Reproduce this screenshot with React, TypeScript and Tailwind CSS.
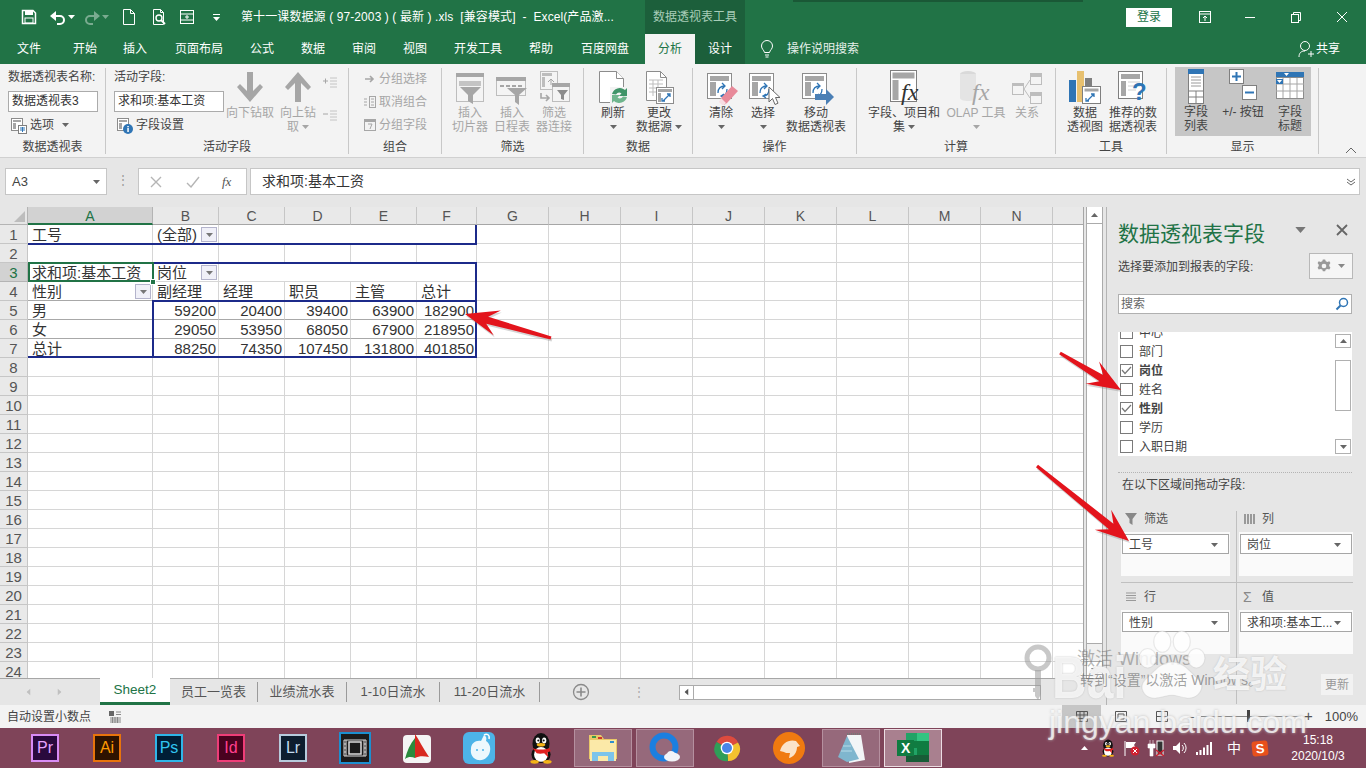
import type { ReactNode } from "react";

const DIM = "#a6a6a6";

function Caret({ className = "", color = "#666" }: { className?: string; color?: string }) {
  return (
    <svg width="7" height="4" viewBox="0 0 7 4" className={className}>
      <path d="M0 0h7L3.5 4z" fill={color} />
    </svg>
  );
}

// ---- ribbon icons ----
function PivotBase({ children, w = 36, h = 36 }: { children?: ReactNode; w?: number; h?: number }) {
  return (
    <svg width={w} height={h} viewBox="0 0 36 36">
      <rect x="4.5" y="4.5" width="24" height="25" fill="#fff" stroke="#8c8c8c" />
      <rect x="7" y="7" width="19" height="5" fill="#a6a6a6" />
      <rect x="7" y="13" width="6" height="14" fill="#a6a6a6" />
      <path d="M15 24c0-5 3-7 7-7m-3-3 3 3-3 3M24 20c0 4-2 7-6 7m3 2-3-2 3-2" fill="none" stroke="#2f75b5" strokeWidth="1.300" />
      {children}
    </svg>
  );
}

function SlicerIcon() {
  return (
    <svg width="34" height="36" viewBox="0 0 34 36">
      <rect x="3.500" y="4.500" width="27" height="28" fill="#f4f4f4" stroke="#bdbdbd" />
      <rect x="3" y="4" width="28" height="4" fill="#a6a6a6" />
      <rect x="6" y="12" width="22" height="5" fill="#c4c4c4" />
      <path d="M7 18h21l-8 8v9l-5-3v-6z" fill="#a6a6a6" />
    </svg>
  );
}

function TimelineIcon() {
  return (
    <svg width="34" height="36" viewBox="0 0 34 36">
      <rect x="1.500" y="8.500" width="29" height="18" fill="#f4f4f4" stroke="#bdbdbd" />
      <rect x="1" y="8" width="30" height="4" fill="#a6a6a6" />
      <path d="M5 17h4M11 17h4M17 17h4M23 17h4" stroke="#a6a6a6" strokeWidth="2" />
      <path d="M12 19h20l-8 7v10l-4-3v-7z" fill="#a6a6a6" />
    </svg>
  );
}

function FilterLinkIcon() {
  return (
    <svg width="34" height="36" viewBox="0 0 34 36">
      <rect x="3.500" y="2.500" width="17" height="18" fill="#f4f4f4" stroke="#bdbdbd" />
      <rect x="5" y="4" width="10" height="3" fill="#bdbdbd" />
      <rect x="5" y="8" width="3" height="10" fill="#bdbdbd" />
      <path d="M11 13l3-3 3 3M14 10v6" fill="none" stroke="#a6a6a6" />
      <rect x="15.500" y="14.500" width="17" height="18" fill="#f4f4f4" stroke="#bdbdbd" />
      <rect x="15" y="14" width="18" height="4" fill="#a6a6a6" />
      <path d="M20 21h11l-4 5v5l-3-1v-4z" fill="#8c8c8c" />
      <path d="M4 24v5h8m-3-3 3 3-3 3" fill="none" stroke="#a6a6a6" strokeWidth="1.600" />
    </svg>
  );
}

function RefreshIcon() {
  return (
    <svg width="34" height="36" viewBox="0 0 34 36">
      <path d="M3.500 2.500h17l7 7v24h-24z" fill="#fff" stroke="#8c8c8c" />
      <path d="M20.500 2.500v7h7" fill="#fff" stroke="#8c8c8c" />
      <rect x="14" y="18" width="20" height="18" fill="#f3f3f3" />
      <path d="M16 25a8 8 0 0 1 13-4l2-2v8h-8l2.500-2.500a4 4 0 0 0-5.500 1z" fill="#3f9468" />
      <path d="M31 28a8 8 0 0 1-13 4l-2 2v-8h8l-2.500 2.500a4 4 0 0 0 5.500-1z" fill="#6fb58d" />
    </svg>
  );
}

function ChangeSourceIcon() {
  return (
    <svg width="34" height="36" viewBox="0 0 34 36">
      <path d="M4.500 2.500h14l6 6v23h-20z" fill="#fff" stroke="#8c8c8c" />
      <path d="M18.500 2.500v6h6" fill="none" stroke="#8c8c8c" />
      <path d="M7 11h14M7 15h14M7 19h14M7 23h14M11 11v16M16 11v16" stroke="#bdbdbd" />
      <rect x="14.500" y="18.500" width="17" height="16" fill="#fff" stroke="#8c8c8c" />
      <rect x="16" y="20" width="14" height="3" fill="#a6a6a6" />
      <rect x="16" y="24" width="3" height="9" fill="#a6a6a6" />
      <path d="M21 32l7-7m-3 0h3v3M20 29v3h3" fill="none" stroke="#2f75b5" strokeWidth="1.300" />
    </svg>
  );
}

function ClearIcon() {
  return (
    <PivotBase>
      <path d="M18 29l11-12 6 5-11 12-3 2z" fill="#e88a9a" />
      <path d="M18 29l5 5-2 2h-2l-3-3z" fill="#f7dde2" />
    </PivotBase>
  );
}

function SelectIcon() {
  return (
    <PivotBase>
      <path d="M24 18v15l3.500-3.500 2.500 6 3-1.300-2.500-5.700H35z" fill="#fff" stroke="#666" />
    </PivotBase>
  );
}

function MoveIcon() {
  return (
    <PivotBase>
      <path d="M17 25h11v-5l8 8-8 8v-5H17z" fill="#4a7fb5" />
    </PivotBase>
  );
}

function FieldFxIcon() {
  return (
    <svg width="34" height="38" viewBox="0 0 34 38">
      <rect x="3.500" y="2.500" width="26" height="31" fill="#fff" stroke="#7f7f7f" />
      <rect x="5.500" y="4.500" width="22" height="6" fill="#a6a6a6" />
      <rect x="5.500" y="12" width="6" height="20" fill="#a6a6a6" />
      <text x="14" y="32" fontSize="24" fontStyle="italic" fontFamily="Liberation Serif" fill="#333">fx</text>
    </svg>
  );
}

function OlapIcon() {
  return (
    <svg width="40" height="38" viewBox="0 0 40 38">
      <ellipse cx="12" cy="6" rx="8" ry="3" fill="#d9d9d9" />
      <path d="M4 6v24c0 4 16 4 16 0V6z" fill="#e4e4e4" />
      <text x="16" y="32" fontSize="24" fontStyle="italic" fontFamily="Liberation Serif" fill="#a6a6a6">fx</text>
    </svg>
  );
}

function RelationIcon() {
  return (
    <svg width="34" height="36" viewBox="0 0 34 36">
      <g fill="#f4f4f4" stroke="#bdbdbd">
        <rect x="2.500" y="14.500" width="11" height="11" />
        <rect x="20.500" y="4.500" width="11" height="11" />
        <rect x="20.500" y="23.500" width="11" height="11" />
      </g>
      <path d="M21 5h10v3H21zM21 24h10v3H21zM3 15h10v2H3z" fill="#bdbdbd" />
      <path d="M14 20l6-9M14 20l6 9" stroke="#bdbdbd" />
    </svg>
  );
}

function PivotChartIcon() {
  return (
    <svg width="34" height="38" viewBox="0 0 34 38">
      <rect x="1" y="12" width="7" height="22" fill="#2f75b5" />
      <rect x="9" y="3" width="7" height="31" fill="#e7c06f" />
      <rect x="17" y="10" width="7" height="10" fill="#7f7f7f" />
      <rect x="14.500" y="18.500" width="18" height="17" fill="#fff" stroke="#7f7f7f" />
      <rect x="16.500" y="20.500" width="14" height="3" fill="#a6a6a6" />
      <path d="M19 33l7-7m-3 0h3v3M18 30v3h3" fill="none" stroke="#2f75b5" strokeWidth="1.300" />
    </svg>
  );
}

function RecommendIcon() {
  return (
    <svg width="34" height="38" viewBox="0 0 34 38">
      <rect x="2.500" y="3.500" width="24" height="27" fill="#fff" stroke="#7f7f7f" />
      <rect x="5" y="6" width="19" height="5" fill="#a6a6a6" />
      <rect x="5" y="13" width="5" height="15" fill="#a6a6a6" />
      <path d="M12 14h12M12 18h12M12 22h8" stroke="#d0d0d0" />
      <text x="16" y="32" fontSize="24" fontWeight="bold" fontFamily="Liberation Sans" fill="#2f75b5">?</text>
    </svg>
  );
}

function FieldListIcon() {
  return (
    <svg width="20" height="38" viewBox="0 0 20 38">
      <rect x="2.500" y="2.500" width="15" height="34" fill="#fff" stroke="#7f7f7f" />
      <rect x="2" y="2" width="16" height="5" fill="#2f75b5" />
      <path d="M5 10h10M5 13h10M5 16h10M5 19h10" stroke="#9a9a9a" />
      <path d="M3 24h14M3 30h14M10 24v12" stroke="#7f7f7f" />
    </svg>
  );
}

function PlusMinusIcon() {
  return (
    <svg width="30" height="36" viewBox="0 0 30 36">
      <rect x="1.500" y="1.500" width="14" height="14" fill="#fff" stroke="#7f7f7f" />
      <path d="M4 8.500h9M8.500 4v9" stroke="#2f75b5" strokeWidth="2" />
      <rect x="14.500" y="17.500" width="14" height="14" fill="#fff" stroke="#7f7f7f" />
      <path d="M17 24.500h9" stroke="#2f75b5" strokeWidth="2" />
    </svg>
  );
}

function HeaderIcon() {
  return (
    <svg width="30" height="36" viewBox="0 0 30 36">
      <rect x="1" y="4" width="28" height="6" fill="#2f75b5" />
      <rect x="1.500" y="9.500" width="27" height="21" fill="#fff" stroke="#8c8c8c" />
      <path d="M1 16h28M1 23h28M8 10v20M15 10v20M22 10v20" stroke="#a6a6a6" />
      <rect x="1" y="11" width="7" height="5" fill="#2f75b5" />
      <path d="M9 5h5l-2.500 3zM2 12h5l-2.500 3z" fill="#fff" />
    </svg>
  );
}

function Arrow({ up }: { up?: boolean }) {
  return (
    <svg width="28" height="32" viewBox="0 0 28 32" className={up ? "" : "rotate-180"}>
      <path d="M14 1L27 16l-3 3-7-7v19h-6V12l-7 7-3-3z" fill="#a6a6a6" />
    </svg>
  );
}

function SmallTable({ color = "#8c8c8c", info }: { color?: string; info?: boolean }) {
  return (
    <svg width="17" height="17" viewBox="0 0 17 17">
      <rect x="1.500" y="1.500" width="11" height="12" fill="#fff" stroke={color} />
      <rect x="3" y="3" width="8" height="2" fill="#a6a6a6" />
      <rect x="3" y="6" width="3" height="6" fill="#a6a6a6" />
      {info ? (
        <>
          <circle cx="12" cy="12" r="5" fill="#2f75b5" />
          <rect x="11.300" y="11" width="1.500" height="4" fill="#fff" />
          <rect x="11.300" y="9" width="1.500" height="1.300" fill="#fff" />
        </>
      ) : (
        <>
          <rect x="8.500" y="8.500" width="8" height="8" fill="#fff" stroke="#7f7f7f" />
          <path d="M10 11h5M10 13h5M12.500 10v5" stroke="#2f75b5" />
        </>
      )}
    </svg>
  );
}

function Big({ w, icon, lines, dim, caret }: { w: string; icon: ReactNode; lines: string[]; dim?: boolean; caret?: "inline" | "below" }) {
  return (
    <div className={`${w} shrink-0 flex flex-col items-center ${dim ? "text-[#a6a6a6]" : "text-[#444]"}`}>
      <div className="h-[38px] flex items-center justify-center">{icon}</div>
      {lines.map((l, i) => (
        <div key={i} className="h-[14px] leading-[14px] whitespace-nowrap flex items-center gap-[3px]">
          {l}
          {caret === "inline" && i === lines.length - 1 && <Caret color={dim ? DIM : "#666"} />}
        </div>
      ))}
      {caret === "below" && (
        <div className="h-[14px] flex items-center">
          <Caret color={dim ? DIM : "#666"} />
        </div>
      )}
    </div>
  );
}

function Group({ w, label, children }: { w: string; label: string; children: ReactNode }) {
  return (
    <div className={`${w} shrink-0 h-[86px] border-r border-[#c8c8c8] flex flex-col`}>
      <div className="h-[72px] flex">{children}</div>
      <div className="h-[14px] leading-[14px] text-center text-[#444]">{label}</div>
    </div>
  );
}

function Ribbon() {
  return (
    <div className="h-[94px] pt-[4px] bg-[#f3f3f3] border-b border-[#d0d0d0] flex text-[12px]">
      <Group w="w-[106px]" label="数据透视表">
        <div className="pl-2 pt-[2px] text-[#444]">
          <div className="leading-[14px]">数据透视表名称:</div>
          <div className="mt-[7px] w-[90px] h-[21px] border border-[#ababab] bg-white px-[3px] leading-[19px] text-[#333]">数据透视表3</div>
          <div className="mt-[5px] h-[16px] flex items-center">
            <span className="ml-[2px] mr-[3px]"><SmallTable /></span>选项<Caret className="ml-[8px]" />
          </div>
        </div>
      </Group>
      <Group w="w-[243px]" label="活动字段">
        <div className="pl-2 pt-[2px] w-[119px] shrink-0 text-[#444]">
          <div className="leading-[14px]">活动字段:</div>
          <div className="mt-[7px] w-[110px] h-[21px] border border-[#ababab] bg-white px-[3px] leading-[19px] text-[#333]">求和项:基本工资</div>
          <div className="mt-[5px] h-[16px] flex items-center">
            <span className="ml-[2px] mr-[3px]"><SmallTable info /></span>字段设置
          </div>
        </div>
        <Big w="w-[50px]" dim icon={<Arrow />} lines={["向下钻取"]} />
        <Big w="w-[46px]" dim icon={<Arrow up />} lines={["向上钻", "取"]} caret="inline" />
        <div className="flex flex-col items-center w-[18px] pt-[7px] text-[#a6a6a6]">
          <svg width="16" height="16" viewBox="0 0 16 16"><path d="M1 6h5M3.500 3.500v5" stroke="#a6a6a6" /><path d="M8 3h7M8 6h7M8 9h7M8 12h7" stroke="#c4c4c4" /></svg>
          <svg width="16" height="16" viewBox="0 0 16 16" className="mt-[17px]"><path d="M1 6h5" stroke="#a6a6a6" /><path d="M8 3h7M8 6h7M8 9h7M8 12h7" stroke="#c4c4c4" /></svg>
        </div>
      </Group>
      <Group w="w-[93px]" label="组合">
        <div className="pl-[14px] -mt-px text-[#a6a6a6]">
          <div className="h-[23px] flex items-center gap-[2px]">
            <svg width="14" height="14" viewBox="0 0 14 14"><path d="M2 7h8m-3-3 3 3-3 3" fill="none" stroke="#a6a6a6" strokeWidth="1.600" /></svg>分组选择
          </div>
          <div className="h-[23px] flex items-center gap-[2px]">
            <svg width="14" height="14" viewBox="0 0 14 14"><g fill="none" stroke="#a6a6a6"><rect x="6.500" y="1.500" width="6" height="11" /><path d="M1 4h3M1 7h3M1 10h3M8 4h3M8 7h3M8 10h3" /></g></svg>取消组合
          </div>
          <div className="h-[23px] flex items-center gap-[2px]">
            <svg width="14" height="14" viewBox="0 0 14 14"><rect x="1.500" y="1.500" width="11" height="11" fill="none" stroke="#a6a6a6" /><path d="M1 2h12v2H1z" fill="#a6a6a6" /><path d="M5 6h4l-2 5" fill="none" stroke="#a6a6a6" /></svg>分组字段
          </div>
        </div>
      </Group>
      <Group w="w-[142px]" label="筛选">
        <div className="pl-[7px] flex">
          <Big w="w-[42px]" dim icon={<SlicerIcon />} lines={["插入", "切片器"]} />
          <Big w="w-[42px]" dim icon={<TimelineIcon />} lines={["插入", "日程表"]} />
          <Big w="w-[42px]" dim icon={<FilterLinkIcon />} lines={["筛选", "器连接"]} />
        </div>
      </Group>
      <Group w="w-[109px]" label="数据">
        <div className="pl-[6px] flex">
          <Big w="w-[46px]" icon={<RefreshIcon />} lines={["刷新"]} caret="below" />
          <Big w="w-[46px]" icon={<ChangeSourceIcon />} lines={["更改", "数据源"]} caret="inline" />
        </div>
      </Group>
      <Group w="w-[164px]" label="操作">
        <div className="pl-[7px] flex">
          <Big w="w-[42px]" icon={<ClearIcon />} lines={["清除"]} caret="below" />
          <Big w="w-[42px]" icon={<SelectIcon />} lines={["选择"]} caret="below" />
          <Big w="w-[64px]" icon={<MoveIcon />} lines={["移动", "数据透视表"]} />
        </div>
      </Group>
      <Group w="w-[199px]" label="计算">
        <div className="pl-[4px] flex">
          <Big w="w-[86px]" icon={<FieldFxIcon />} lines={["字段、项目和", "集"]} caret="inline" />
          <Big w="w-[58px]" dim icon={<OlapIcon />} lines={["OLAP 工具"]} caret="below" />
          <Big w="w-[44px]" dim icon={<RelationIcon />} lines={["关系"]} />
        </div>
      </Group>
      <Group w="w-[111px]" label="工具">
        <div className="pl-[5px] flex">
          <Big w="w-[48px]" icon={<PivotChartIcon />} lines={["数据", "透视图"]} />
          <Big w="w-[48px]" icon={<RecommendIcon />} lines={["推荐的数", "据透视表"]} />
        </div>
      </Group>
      <Group w="w-[152px]" label="显示">
        <div className="ml-[8px] -mt-px w-[136px] h-[69px] bg-[#c6c6c6] flex">
          <Big w="w-[42px]" icon={<FieldListIcon />} lines={["字段", "列表"]} />
          <Big w="w-[52px]" icon={<PlusMinusIcon />} lines={["+/- 按钮"]} />
          <Big w="w-[42px]" icon={<HeaderIcon />} lines={["字段", "标题"]} />
        </div>
      </Group>
      <div className="flex-1 flex justify-end items-end pb-[3px] pr-[9px]">
        <svg width="12" height="7" viewBox="0 0 12 7"><path d="M1 6l5-5 5 5" fill="none" stroke="#666" /></svg>
      </div>
    </div>
  );
}

// ---- title / tabs ----
function TitleBar() {
  return (
    <div className="relative h-[34px] bg-[#217346] flex items-center text-white text-[12px]">
      <svg width="18" height="18" viewBox="0 0 18 18" className="ml-[20px]">
        <path d="M2.500 2.500h10.500l2.500 2.500v10.500h-13z" fill="none" stroke="#fff" strokeWidth="1.500" />
        <rect x="5" y="3" width="8" height="4" fill="#fff" />
        <rect x="5" y="10" width="8" height="5" fill="none" stroke="#fff" />
      </svg>
      <svg width="18" height="18" viewBox="0 0 18 18" className="ml-[11px]">
        <path d="M4 8h7a4 4 0 0 1 0 8H8" fill="none" stroke="#fff" strokeWidth="2" />
        <path d="M7 3v10L1 8z" fill="#fff" />
      </svg>
      <Caret color="#fff" className="ml-[1px]" />
      <svg width="18" height="18" viewBox="0 0 18 18" className="ml-[8px] -scale-x-100 opacity-40">
        <path d="M4 8h7a4 4 0 0 1 0 8H8" fill="none" stroke="#fff" strokeWidth="2" />
        <path d="M7 3v10L1 8z" fill="#fff" />
      </svg>
      <Caret color="#fff" className="ml-[1px] opacity-40" />
      <svg width="16" height="18" viewBox="0 0 16 18" className="ml-[12px]">
        <path d="M2.500 1.500h7l4 4v11h-11zM9.500 1.500v4h4" fill="none" stroke="#fff" />
      </svg>
      <svg width="18" height="18" viewBox="0 0 18 18" className="ml-[13px]">
        <path d="M3.500 1.500h7l3 3v12h-10zM10.500 1.500v3h3" fill="none" stroke="#fff" />
        <circle cx="9" cy="10" r="3" fill="none" stroke="#fff" strokeWidth="1.400" />
        <path d="M11 12l4 4" stroke="#fff" strokeWidth="1.800" />
      </svg>
      <svg width="18" height="18" viewBox="0 0 18 18" className="ml-[10px]">
        <rect x="2.500" y="2.500" width="13" height="13" fill="none" stroke="#fff" />
        <path d="M3 6h12M3 12h12M9 7v4M7 9h4" stroke="#fff" />
      </svg>
      <span className="ml-[17px] text-[11px] leading-none">
        <span className="block w-[7px] border-t border-white mb-[2px]"></span>
        <Caret color="#fff" />
      </span>
      <div className="ml-[21px] whitespace-pre w-[385px] tracking-[0.1px]">第十一课数据源 ( 97-2003 ) ( 最新 ) .xls  [兼容模式]  -  Excel(产品激...</div>
      <div className="ml-[19px] w-[100px] h-[34px] bg-[#1c5f3b] text-[#a8cdb8] flex items-center justify-center">数据透视表工具</div>
      <div className="ml-[381px] w-[46px] h-[19px] bg-white text-[#217346] flex items-center justify-center">登录</div>
      <svg width="14" height="14" viewBox="0 0 14 14" className="ml-[26px]">
        <rect x="1.500" y="1.500" width="11" height="11" fill="none" stroke="#fff" />
        <path d="M1 4h12M7 11V6M5 8l2-2 2 2" fill="none" stroke="#fff" />
      </svg>
      <div className="ml-[33px] w-[10px] border-t border-white"></div>
      <svg width="12" height="12" viewBox="0 0 12 12" className="ml-[35px]">
        <rect x="1.500" y="3.500" width="7" height="8" fill="none" stroke="#fff" />
        <path d="M3.500 3V1.500h7v8H9" fill="none" stroke="#fff" />
      </svg>
      <svg width="12" height="12" viewBox="0 0 12 12" className="ml-[34px]">
        <path d="M1 1l10 10M11 1L1 11" stroke="#fff" />
      </svg>
      <div className="absolute left-[793px] top-0 w-[290px] h-[2px] bg-[#15462b] opacity-60"></div>
    </div>
  );
}

function TabBar() {
  const tabs: [string, string][] = [
    ["文件", "w-[58px]"],
    ["开始", "w-[54px]"],
    ["插入", "w-[46px]"],
    ["页面布局", "w-[82px]"],
    ["公式", "w-[44px]"],
    ["数据", "w-[58px]"],
    ["审阅", "w-[44px]"],
    ["视图", "w-[58px]"],
    ["开发工具", "w-[68px]"],
    ["帮助", "w-[58px]"],
    ["百度网盘", "w-[70px]"],
  ];
  return (
    <div className="h-[30px] bg-[#217346] flex items-center text-white text-[12px]">
      {tabs.map(([t, w]) => (
        <div key={t} className={`${w} shrink-0 text-center`}>{t}</div>
      ))}
      <div className="ml-[5px] w-[50px] h-[30px] bg-[#f3f3f3] text-[#217346] flex items-center justify-center">分析</div>
      <div className="w-[50px] h-[30px] bg-[#1c5f3b] flex items-center justify-center">设计</div>
      <svg width="14" height="18" viewBox="0 0 14 18" className="ml-[15px]">
        <path d="M4.500 12.500C4 10 1.500 9 1.500 6a5.500 5.500 0 0 1 11 0c0 3-2.500 4-3 6.500zM5 15h4M5.500 17h3" fill="none" stroke="#fff" />
      </svg>
      <div className="ml-[13px] w-[72px] text-[#e6f0ea]">操作说明搜索</div>
      <svg width="16" height="18" viewBox="0 0 16 18" className="ml-[439px]">
        <circle cx="7" cy="6" r="4.500" fill="none" stroke="#fff" />
        <path d="M1 17c0-4 2-6 6-6M10 14h6M13 11v6" fill="none" stroke="#fff" />
      </svg>
      <div className="ml-[2px]">共享</div>
    </div>
  );
}

function FormulaBar() {
  return (
    <div className="h-[49px] bg-[#e6e6e6] pt-[10px] pl-[5px] flex text-[#444]">
      <div className="w-[102px] h-[27px] bg-white border border-[#c6c6c6] flex items-center pl-[6px] text-[13px]">
        A3<Caret className="ml-auto mr-[6px]" />
      </div>
      <div className="w-[31px] text-center leading-[25px] text-[#999] text-[12px]">⋮</div>
      <div className="w-[109px] h-[27px] bg-white border border-[#c6c6c6] flex items-center text-[#b0b0b0]">
        <svg width="12" height="12" viewBox="0 0 12 12" className="ml-[11px]"><path d="M1 1l10 10M11 1L1 11" stroke="#b5b5b5" strokeWidth="1.400" /></svg>
        <svg width="14" height="12" viewBox="0 0 14 12" className="ml-[24px]"><path d="M1 7l4 4 8-10" fill="none" stroke="#b5b5b5" strokeWidth="1.400" /></svg>
        <span className="ml-[22px] text-[13px] italic text-[#555] font-['Liberation_Serif',serif]">fx</span>
      </div>
      <div className="ml-[3px] w-[1110px] h-[27px] bg-white border border-[#c6c6c6] flex items-center pl-[11px] text-[14px] text-[#333]">
        求和项:基本工资
        <svg width="10" height="8" viewBox="0 0 10 8" className="ml-auto mr-[3px]"><path d="M1 1l4 3 4-3M1 4l4 3 4-3" fill="none" stroke="#666" /></svg>
      </div>
    </div>
  );
}

// ---- sheet ----
const LETTERS = ["A", "B", "C", "D", "E", "F", "G", "H", "I", "J", "K", "L", "M", "N", ""];
const CELLS: Record<number, (string | number)[]> = {
  1: ["工号", "(全部)"],
  3: ["求和项:基本工资", "岗位"],
  4: ["性别", "副经理", "经理", "职员", "主管", "总计"],
  5: ["男", 59200, 20400, 39400, 63900, 182900],
  6: ["女", 29050, 53950, 68050, 67900, 218950],
  7: ["总计", 88250, 74350, 107450, 131800, 401850],
};

function FilterBtn() {
  return (
    <div className="absolute right-[1px] top-[2px] w-[16px] h-[15px] bg-[#f0f0f8] border border-[#b4b4cc] flex items-center justify-center">
      <Caret color="#777" />
    </div>
  );
}

function Sheet() {
  const rows = Array.from({ length: 24 }, (_, i) => i + 1);
  return (
    <div className="relative w-[1084px] h-[471px] overflow-hidden bg-white border-r border-[#a6a6a6] font-['Liberation_Sans','Noto_Sans_CJK_SC',sans-serif]">
      <div className="grid grid-cols-[28px_125px_66px_66px_66px_66px_60px_72px_72px_72px_72px_72px_72px_72px_72px_31px] grid-rows-[18px] auto-rows-[19px]">
        <div className="bg-[#e6e6e6] border-r border-b border-[#b4b4b4] flex items-end justify-end p-[2px]">
          <svg width="11" height="11" viewBox="0 0 11 11"><path d="M11 0v11H0z" fill="#bdbdbd" /></svg>
        </div>
        {LETTERS.map((l, i) => (
          <div
            key={i}
            className={`border-r text-[14px] leading-[19px] text-center ${i === 0 ? "bg-[#d2d2d2] border-[#b4b4b4] border-b-2 border-b-[#217346] text-[#217346]" : "bg-[#e9e9e9] border-[#c6c6c6] border-b border-b-[#a6a6a6] text-[#555]"}`}
          >
            {l}
          </div>
        ))}
        {rows.map((r) => (
          <Row key={r} r={r} />
        ))}
      </div>

      {/* pivot table outlines */}
      <div className="absolute left-[28px] top-[36px] w-[449px] h-[2px] bg-[#1c2a8a]"></div>
      <div className="absolute left-[475px] top-[18px] w-[2px] h-[19px] bg-[#1c2a8a]"></div>
      <div className="absolute left-[152px] top-[55px] w-[325px] h-[2px] bg-[#1c2a8a]"></div>
      <div className="absolute left-[475px] top-[55px] w-[2px] h-[96px] bg-[#1c2a8a]"></div>
      <div className="absolute left-[152px] top-[93px] w-[325px] h-[2px] bg-[#1c2a8a]"></div>
      <div className="absolute left-[152px] top-[94px] w-[2px] h-[57px] bg-[#1c2a8a]"></div>
      <div className="absolute left-[28px] top-[149px] w-[449px] h-[2px] bg-[#1c2a8a]"></div>
      {/* selected cell */}
      <div className="absolute left-[28px] top-[55px] w-[126px] h-[20px] border-2 border-[#217346]"></div>
      <div className="absolute left-[150px] top-[72px] w-[6px] h-[6px] bg-[#217346] border border-white"></div>
    </div>
  );
}

function Row({ r }: { r: number }) {
  const data = CELLS[r] ?? [];
  const rowHeadSel = r === 3;
  return (
    <>
      <div className={`border-r border-b text-[15px] leading-[20px] text-center ${rowHeadSel ? "bg-[#d2d2d2] border-[#b4b4b4] text-[#217346]" : "bg-[#e9e9e9] border-[#c6c6c6] text-[#555]"}`}>
        {r}
      </div>
      {LETTERS.map((_, c) => {
        const v = data[c];
        const merged = (r === 1 || r === 3) && c >= 2 && c <= 4;
        const dark = r >= 4 && r <= 6 && c <= 5;
        return (
          <div
            key={c}
            className={`relative border-b text-[15px] leading-[20px] pl-[4px] pr-[2px] whitespace-nowrap overflow-hidden text-[#333] ${merged ? "" : "border-r border-r-[#d6d6d6]"} ${dark ? "border-b-[#a8a8a8]" : "border-b-[#d6d6d6]"} ${typeof v === "number" ? "text-right" : "text-left"}`}
          >
            {v}
            {((r === 1 && c === 1) || (r === 3 && c === 1) || (r === 4 && c === 0)) && <FilterBtn />}
          </div>
        );
      })}
    </>
  );
}

function VScroll() {
  return (
    <div className="w-[22px] h-[471px] bg-[#e6e6e6] pl-[2px] flex flex-col">
      <div className="w-[17px] h-[471px] border-x border-[#ababab] bg-[#f0f0f0] flex flex-col">
        <div className="h-[17px] bg-white border-b border-[#ababab] flex items-center justify-center"><Caret className="rotate-180" /></div>
        <div className="h-[420px] bg-white border-b border-[#ababab]"></div>
        <div className="flex-1"></div>
        <div className="h-[17px] bg-white border-t border-[#ababab] flex items-center justify-center"><Caret /></div>
      </div>
    </div>
  );
}

function SheetTabs() {
  return (
    <div className="h-[27px] bg-[#e6e6e6] border-t border-[#a6a6a6] flex items-center text-[13px] text-[#555]">
      <div className="w-[100px] flex pl-[25px] gap-[24px]">
        <Caret className="rotate-90" color="#c0c0c0" />
        <Caret className="-rotate-90" color="#c0c0c0" />
      </div>
      <div className="w-[70px] h-[27px] -mt-px bg-white border-b-[3px] border-[#217346] text-[#217346] text-[13.500px] flex items-center justify-center">Sheet2</div>
      <div className="w-[88px] h-[20px] border-r border-[#9a9a9a] text-center leading-[20px]">员工一览表</div>
      <div className="w-[89px] h-[20px] border-r border-[#9a9a9a] text-center leading-[20px]">业绩流水表</div>
      <div className="w-[93px] h-[20px] border-r border-[#9a9a9a] text-center leading-[20px]">1-10日流水</div>
      <div className="w-[100px] h-[20px] border-r border-[#9a9a9a] text-center leading-[20px]">11-20日流水</div>
      <svg width="18" height="18" viewBox="0 0 18 18" className="ml-[32px]">
        <circle cx="9" cy="9" r="7.500" fill="none" stroke="#8a8a8a" strokeWidth="1.300" />
        <path d="M4.500 9h9M9 4.500v9" stroke="#8a8a8a" strokeWidth="1.600" />
      </svg>
      <div className="w-[84px] text-center text-[#aaa] text-[12px] pl-[14px]">⋮</div>
      <div className="ml-[5px] w-[362px] h-[15px] bg-[#f4f4f4] border border-[#ababab] flex items-center">
        <div className="w-[14px] h-[13px] bg-white border-r border-[#ababab] flex items-center justify-center"><Caret className="rotate-90" color="#555" /></div>
        <div className="flex-1 h-[13px] bg-white"></div>
      </div>
    </div>
  );
}

// ---- field panel ----
function FieldRow({ label, checked }: { label: string; checked?: boolean }) {
  return (
    <div className="h-[19px] flex items-center pl-[2px] text-[12px] text-[#444]">
      <div className="w-[13px] h-[13px] border border-[#7a7a7a] bg-white flex items-center justify-center mr-[6px]">
        {checked && <svg width="11" height="9" viewBox="0 0 11 9"><path d="M1 4l3 3.500L10 1" fill="none" stroke="#777" strokeWidth="1.200" /></svg>}
      </div>
      <span className={checked ? "font-bold" : ""}>{label}</span>
    </div>
  );
}

function Chip({ label }: { label: string }) {
  return (
    <div className="mx-[1px] mt-[2px] h-[20px] pt-[1px] bg-white border border-[#a6a6a6] flex items-center pl-[6px] pr-[10px] text-[12px] text-[#444] whitespace-nowrap">
      {label}
      <Caret className="ml-auto" />
    </div>
  );
}

function Area({ icon, title, chip, w }: { icon: ReactNode; title: string; chip: string; w: string }) {
  return (
    <div className={w}>
      <div className="h-[16px] flex items-center text-[12px] text-[#555]">
        <span className="w-[23px] pl-[4px] flex">{icon}</span>
        {title}
      </div>
      <div className="mt-[5px] h-[44px] bg-[#fafafa] overflow-hidden">
        <Chip label={chip} />
      </div>
    </div>
  );
}

function FieldPanel() {
  return (
    <div className="w-[260px] h-[498px] bg-[#e6e6e6] border-l border-[#b4b4b4] pl-[11px] pt-[9px] text-[12px] text-[#444]">
      <div className="h-[37px] flex items-center pr-[18px]">
        <span className="text-[21px] text-[#217346] leading-none -mt-[2px]">数据透视表字段</span>
        <Caret className="ml-auto mr-[32px] scale-150 -mt-[10px]" color="#777" />
        <svg width="12" height="12" viewBox="0 0 12 12" className="-mt-[10px]"><path d="M1 1l10 10M11 1L1 11" stroke="#666" strokeWidth="1.800" /></svg>
      </div>
      <div className="h-[26px] flex items-center pr-[13px]">
        <span className="mt-[2px]">选择要添加到报表的字段:</span>
        <div className="ml-auto w-[44px] h-[26px] bg-[#f6f6f6] border border-[#b8b8b8] flex items-center justify-center gap-[7px]">
          <svg width="14" height="14" viewBox="0 0 24 24"><path d="M10 1h4l1 3 3 1 3-1 2 3-2 3v2l2 3-2 3-3-1-3 1-1 3h-4l-1-3-3-1-3 1-2-3 2-3v-2L1 7l2-3 3 1 3-1zM12 8a4 4 0 1 0 0 8 4 4 0 0 0 0-8z" fill="#999" /></svg>
          <Caret color="#888" />
        </div>
      </div>
      <div className="mt-[15px] w-[234px] h-[20px] bg-white border border-[#b0b0b0] flex items-center pl-[2px] pr-[2px] text-[#666]">
        搜索
        <svg width="14" height="14" viewBox="0 0 14 14" className="ml-auto"><circle cx="8.500" cy="5.500" r="4" fill="none" stroke="#2f75b5" strokeWidth="1.500" /><path d="M5.500 8.500L1.500 12.500" stroke="#2f75b5" strokeWidth="2" /></svg>
      </div>
      <div className="mt-[18px] w-[234px] h-[124px] bg-white flex overflow-hidden">
        <div className="flex-1 -mt-[9px]">
          <FieldRow label="中心" />
          <FieldRow label="部门" />
          <FieldRow label="岗位" checked />
          <FieldRow label="姓名" />
          <FieldRow label="性别" checked />
          <FieldRow label="学历" />
          <FieldRow label="入职日期" />
        </div>
        <div className="w-[16px] mr-[1px] flex flex-col py-[2px]">
          <div className="h-[14px] border border-[#b0b0b0] flex items-center justify-center"><Caret className="rotate-180" /></div>
          <div className="mt-[12px] h-[51px] border border-[#b0b0b0]"></div>
          <div className="mt-auto h-[15px] border border-[#b0b0b0] flex items-center justify-center"><Caret /></div>
        </div>
      </div>
      <div className="mt-[16px] w-[234px] border-t border-dotted border-[#b4b4b4]"></div>
      <div className="mt-[5px] ml-[4px] h-[14px] leading-[14px]">在以下区域间拖动字段:</div>
      <div className="mt-[19px] ml-[3px] w-[232px]">
        <div className="flex h-[71px]">
          <Area
            w="w-[109px]"
            title="筛选"
            chip="工号"
            icon={<svg width="12" height="12" viewBox="0 0 12 12"><path d="M0 0h12L7.500 6v6l-3-2V6z" fill="#888" /></svg>}
          />
          <div className="ml-[6px] pl-[2px] border-l border-[#c0c0c0]">
            <Area
              w="w-[114px]"
              title="列"
              chip="岗位"
              icon={<svg width="12" height="12" viewBox="0 0 12 12"><path d="M1 1h2v10H1zM4 1h2v10H4zM7 1h2v10H7zM10 1h2v10h-2z" fill="#999" /></svg>}
            />
          </div>
        </div>
        <div className="border-t border-[#c0c0c0]"></div>
        <div className="flex h-[121px]">
          <div className="pt-[6px]">
            <Area
              w="w-[109px]"
              title="行"
              chip="性别"
              icon={<svg width="12" height="10" viewBox="0 0 12 10"><path d="M1 1h10M1 3.500h10M1 6h10M1 8.500h10" stroke="#999" /></svg>}
            />
          </div>
          <div className="ml-[6px] pl-[2px] pt-[6px] border-l border-[#c0c0c0] flex flex-col">
            <Area
              w="w-[114px]"
              title="值"
              chip="求和项:基本工..."
              icon={<span className="text-[14px] leading-none text-[#888] font-['Liberation_Sans',sans-serif]">Σ</span>}
            />
            <div className="mt-[20px] ml-auto w-[32px] h-[21px] bg-[#f2f2f2] text-[#999] flex items-center justify-center">更新</div>
          </div>
        </div>
      </div>
    </div>
  );
}

function StatusBar() {
  return (
    <div className="h-[23px] bg-[#f3f3f3] flex items-center text-[12px] text-[#444]">
      <span className="ml-[7px]">自动设置小数点</span>
      <svg width="14" height="14" viewBox="0 0 14 14" className="ml-[17px]">
        <rect x="1" y="1" width="5" height="5" fill="#666" />
        <path d="M8 2h5M8 4.500h5M2 8h11M2 10h11M2 12h11M4.500 7v6M7 7v6M9.500 7v6" stroke="#888" />
      </svg>
      <div className="ml-auto flex items-center">
        <div className="w-[39px] h-[23px] bg-[#c6c6c6] flex items-center justify-center">
          <svg width="14" height="13" viewBox="0 0 14 13"><path d="M1.500 1.500h11v10h-11zM1 5h12M1 8.500h12M5 2v9M9 2v9" fill="none" stroke="#555" /></svg>
        </div>
        <svg width="14" height="13" viewBox="0 0 14 13" className="ml-[13px]"><path d="M1.500 1.500h11v10h-11zM4 4h6v5H4z" fill="none" stroke="#555" /></svg>
        <svg width="14" height="13" viewBox="0 0 14 13" className="ml-[27px]"><path d="M1.500 1.500h11v10h-11zM7 2v9M1 6.500h12" fill="none" stroke="#555" /></svg>
        <span className="ml-[18px] mr-[7px] text-[#555]">–</span>
        <div className="relative w-[100px] h-[1px] bg-[#888]">
          <div className="absolute left-[46px] -top-[6px] w-[3px] h-[12px] bg-[#444]"></div>
        </div>
        <span className="ml-[3px] text-[15px] text-[#555]">+</span>
        <span className="ml-[12px] mr-[8px] text-[13px]">100%</span>
      </div>
    </div>
  );
}

// ---- taskbar ----
function Adobe({ t, border, bg, fg }: { t: string; border: string; bg: string; fg: string }) {
  return (
    <div className={`w-[28px] h-[28px] border-2 ${border} ${bg} ${fg} flex items-center justify-center text-[16px] leading-none font-['Liberation_Sans',sans-serif]`}>
      {t}
    </div>
  );
}

function Penguin({ s = 30 }: { s?: number }) {
  return (
    <svg width={s} height={s} viewBox="0 0 30 30">
      <ellipse cx="15" cy="11" rx="8" ry="10" fill="#111" />
      <ellipse cx="15" cy="21" rx="9" ry="8" fill="#111" />
      <ellipse cx="15" cy="21" rx="6.500" ry="7" fill="#fff" />
      <ellipse cx="12" cy="8" rx="2" ry="2.800" fill="#fff" />
      <ellipse cx="18" cy="8" rx="2" ry="2.800" fill="#fff" />
      <circle cx="12.500" cy="8" r="1" fill="#111" />
      <circle cx="17.500" cy="8" r="1" fill="#111" />
      <ellipse cx="15" cy="12" rx="4" ry="1.700" fill="#f5b417" />
      <path d="M7 15c5 2 11 2 16 0l1 3-3 1 1 5-4-4c-3 .6-5 .5-7 0z" fill="#e02020" />
      <ellipse cx="9" cy="28" rx="4" ry="1.700" fill="#f5b417" />
      <ellipse cx="21" cy="28" rx="4" ry="1.700" fill="#f5b417" />
    </svg>
  );
}

function TaskItem({ active, strong, children }: { active?: boolean; strong?: boolean; children: ReactNode }) {
  return (
    <div className="w-[62px] shrink-0 flex justify-center items-center">
      <div className={`w-[58px] h-[38px] flex items-center justify-center ${strong ? "bg-[#a9808f] border border-[#ecdde3]" : active ? "bg-[#96697b] border border-[#b5909f]" : ""}`}>
        {children}
      </div>
    </div>
  );
}

function Taskbar() {
  return (
    <div className="h-[40px] bg-[#7f4459] flex items-center pl-[14px] text-white text-[12px]">
      <TaskItem><Adobe t="Pr" border="border-[#d98cf5]" bg="bg-[#2a0a3d]" fg="text-[#e6a3ff]" /></TaskItem>
      <TaskItem><Adobe t="Ai" border="border-[#e8740c]" bg="bg-[#2e1300]" fg="text-[#ff9a00]" /></TaskItem>
      <TaskItem><Adobe t="Ps" border="border-[#2fb6e8]" bg="bg-[#001e36]" fg="text-[#31c5f0]" /></TaskItem>
      <TaskItem><Adobe t="Id" border="border-[#ee3d78]" bg="bg-[#49021f]" fg="text-[#ff3f8e]" /></TaskItem>
      <TaskItem><Adobe t="Lr" border="border-[#b7cbdc]" bg="bg-[#0d1d2e]" fg="text-[#c3dcef]" /></TaskItem>
      <TaskItem>
        <svg width="32" height="32" viewBox="0 0 32 32">
          <rect x="1" y="1" width="30" height="30" fill="#1b1b1b" stroke="#1c8fd0" strokeWidth="2" />
          <rect x="10" y="10" width="12" height="12" fill="none" stroke="#ddd" strokeWidth="1.500" />
          <path d="M5 8h22v16H5z" fill="none" stroke="#ddd" />
          <path d="M7 8v16M25 8v16M5 12h2M5 16h2M5 20h2M25 12h2M25 16h2M25 20h2" stroke="#ddd" />
        </svg>
      </TaskItem>
      <TaskItem>
        <svg width="30" height="32" viewBox="0 0 30 32">
          <rect x="1" y="3" width="28" height="28" rx="4" fill="#f4f4f4" />
          <path d="M13 2c4 6 8 14 14 23-6-1-10-1-14 1z" fill="#d8281f" />
          <path d="M13 6C8 12 5 19 3 27c4-3 7-2 10-1z" fill="#2a8a3c" />
        </svg>
      </TaskItem>
      <TaskItem>
        <svg width="32" height="34" viewBox="0 0 32 34">
          <rect x="0" y="1" width="32" height="32" rx="6" fill="#4db4e8" />
          <path d="M8 18c0-6 5-9 10-8l3-6c2 1 3 3 2 6 3 2 5 6 4 10-1 6-6 10-12 9-5-1-8-6-7-11z" fill="#fff" opacity=".9" />
          <path d="M21 4c3-2 6 0 5 4" fill="none" stroke="#fff" strokeWidth="1.500" />
          <circle cx="14" cy="19" r="1" fill="#4db4e8" /><circle cx="20" cy="19" r="1" fill="#4db4e8" />
        </svg>
      </TaskItem>
      <TaskItem><Penguin s={32} /></TaskItem>
      <TaskItem active>
        <svg width="34" height="30" viewBox="0 0 34 30">
          <path d="M3 2h12l3 4h13v20H3z" fill="#e9c868" />
          <path d="M4 7h26v21H4z" fill="#fbe9a8" />
          <rect x="6" y="3" width="4" height="2" fill="#3a9a4a" /><rect x="12" y="4" width="4" height="2" fill="#d0392b" /><rect x="24" y="8" width="4" height="2" fill="#2f8fcf" />
          <path d="M6 28v-9h22v9h-6v-5H12v5z" fill="#7cc4ea" />
        </svg>
      </TaskItem>
      <TaskItem active>
        <svg width="32" height="32" viewBox="0 0 32 32">
          <circle cx="15" cy="15" r="11.500" fill="none" stroke="#1c7fe0" strokeWidth="6" />
          <ellipse cx="23" cy="25" rx="8" ry="4.500" fill="#f1f4f8" />
          <circle cx="22" cy="23" r="4" fill="#f1f4f8" />
        </svg>
      </TaskItem>
      <TaskItem>
        <svg width="30" height="30" viewBox="0 0 30 30">
          <path d="M15 15L4.600 9A12 12 0 0 1 26 9.400z" fill="#dd4b3e" />
          <path d="M15 15l11-5.600a12 12 0 0 1-10 18.600z" fill="#f3c22f" />
          <path d="M15 15l1 13A12 12 0 0 1 4.600 9z" fill="#2f9e58" />
          <circle cx="15" cy="15" r="6.300" fill="#fff" />
          <circle cx="15" cy="15" r="5" fill="#4a86e8" />
        </svg>
      </TaskItem>
      <TaskItem>
        <svg width="32" height="32" viewBox="0 0 32 32">
          <circle cx="16" cy="16" r="16" fill="#f07a10" />
          <path d="M7 19c2-8 9-12 16-10l4 5-3 1c0 5-3 10-8 11l1-5c-3 0-5 0-6-1z" fill="#fbe3c8" />
        </svg>
      </TaskItem>
      <TaskItem active>
        <svg width="32" height="32" viewBox="0 0 32 32">
          <path d="M12 3h14l4 25-16 3z" fill="#f2f5f7" />
          <path d="M3 25L12 4l12 23-12 3z" fill="#7fb6ce" />
          <path d="M8 14l8 0M6 19l11 0" stroke="#b7dbe8" />
          <path d="M12 2h14" stroke="#777" strokeDasharray="1 1" strokeWidth="2" />
        </svg>
      </TaskItem>
      <TaskItem strong>
        <svg width="34" height="32" viewBox="0 0 34 32" className="font-['Liberation_Sans',sans-serif]">
          <rect x="10" y="1" width="23" height="29" fill="#21a366" />
          <rect x="21" y="1" width="12" height="8" fill="#33c481" />
          <rect x="10" y="9" width="23" height="7" fill="#107c41" />
          <rect x="21" y="16" width="12" height="7" fill="#107c41" />
          <rect x="10" y="23" width="23" height="7" fill="#185c37" />
          <rect x="1" y="8" width="17" height="16" fill="#107c41" />
          <text x="5" y="21" fontSize="14" fontWeight="bold" fill="#fff">X</text>
        </svg>
      </TaskItem>
      <div className="ml-auto flex items-center">
        <div className="w-[24px] flex justify-center"><Caret color="#fff" className="rotate-180" /></div>
        <div className="w-[24px] flex justify-center"><Penguin s={18} /></div>
        <div className="w-[24px] flex justify-center">
          <svg width="18" height="18" viewBox="0 0 18 18"><path d="M2 2v15" stroke="#fff" /><path d="M3 3h10l-2 3 2 3H3z" fill="#fff" /><circle cx="12" cy="12" r="4.500" fill="#d02030" /><path d="M10 10l4 4M14 10l-4 4" stroke="#fff" /></svg>
        </div>
        <div className="w-[24px] flex justify-center">
          <svg width="18" height="18" viewBox="0 0 18 18"><path d="M3 1v4M6 1v4M1 5h7v4H6v8H3V9H1z" fill="#fff" stroke="#fff" strokeWidth=".6" /><rect x="10" y="2" width="6" height="14" fill="#333" stroke="#fff" /><path d="M9 11l8 6M17 11l-8 6" stroke="#d02030" strokeWidth="1.500" /></svg>
        </div>
        <div className="w-[24px] flex justify-center">
          <svg width="16" height="16" viewBox="0 0 16 16"><path d="M1 6h3l4-4v12l-4-4H1z" fill="#fff" /><path d="M10 5a4 4 0 0 1 0 6M12 3a7 7 0 0 1 0 10" fill="none" stroke="#fff" /></svg>
        </div>
        <div className="w-[24px] flex justify-center">
          <svg width="17" height="14" viewBox="0 0 17 14"><path d="M0 11h2v3H0zM3.500 9h2v5h-2zM7 6.500h2V14H7zM10.500 4h2v10h-2zM14 1h2v13h-2z" fill="#fff" /></svg>
        </div>
        <div className="w-[32px] text-center text-[14px] pl-[4px]">中</div>
        <div className="w-[24px] flex justify-center">
          <div className="w-[16px] h-[15px] bg-[#e8501c] rounded-[3px] -rotate-6 text-white text-[13px] font-bold leading-[15px] text-center font-['Liberation_Sans',sans-serif]">S</div>
        </div>
        <div className="w-[72px] ml-[10px] mr-[12px] text-center leading-[16px]">
          <div>15:18</div>
          <div>2020/10/3</div>
        </div>
      </div>
    </div>
  );
}

// ---- overlays ----
function arrowPoints(x0: number, y0: number, x1: number, y1: number, head = 32) {
  const l = Math.hypot(x1 - x0, y1 - y0);
  const ux = (x1 - x0) / l, uy = (y1 - y0) / l;
  const nx = -uy, ny = ux;
  const at = (back: number, side: number) => `${x1 - ux * back + nx * side},${y1 - uy * back + ny * side}`;
  return [at(0, 0), at(head * 1.05, 13), at(head * 0.72, 3.6), at(l, 1.6), at(l, -1.6), at(head * 0.72, -3.6), at(head * 1.05, -13)].join(" ");
}

function RedArrows() {
  const arrows = [
    [551, 338, 465, 314],
    [1060, 353, 1121, 390],
    [1037, 466, 1129, 541],
  ];
  return (
    <svg width="1366" height="768" viewBox="0 0 1366 768" className="absolute left-0 top-0 pointer-events-none">
      {arrows.map(([a, b, c, d], i) => (
        <g key={i}>
          <polygon points={arrowPoints(a + 1, b + 2, c + 1, d + 2)} fill="#888" opacity=".35" />
          <polygon points={arrowPoints(a, b, c, d)} fill="#e3141c" />
        </g>
      ))}
    </svg>
  );
}

function Watermark() {
  return (
    <div className="absolute left-0 top-0 w-[1366px] h-[768px] pointer-events-none overflow-hidden font-['Liberation_Sans','Noto_Sans_CJK_SC',sans-serif]">
      <div className="absolute left-[1077px] top-[648px] text-[18px] leading-[22px] text-[#6e6e6e]/50">激活 Windows</div>
      <svg width="30" height="60" viewBox="0 0 30 60" className="absolute left-[1023px] top-[644px]">
        <circle cx="15" cy="14" r="11" fill="none" stroke="#9a9a9a" strokeWidth="5" opacity=".55" />
        <path d="M12 26h6v24l-3 6-3-4v-4h-2v-4h2z" fill="#9a9a9a" opacity=".55" />
      </svg>
      <div className="absolute left-[1052px] top-[648px] text-[60px] leading-[60px] font-bold text-white/80 scale-x-[0.8] origin-left [text-shadow:0_0_2px_#bbb]">Bai</div>
      <svg width="78" height="72" viewBox="0 0 64 74" preserveAspectRatio="none" className="absolute left-[1133px] top-[629px]">
        <g fill="#fff" fillOpacity=".82" stroke="#bbb" strokeOpacity=".3">
          <ellipse cx="12" cy="30" rx="7" ry="10" />
          <ellipse cx="24" cy="13" rx="7" ry="11" />
          <ellipse cx="40" cy="13" rx="7" ry="11" />
          <ellipse cx="52" cy="30" rx="7" ry="10" />
          <path d="M32 34c10 0 16 12 22 18 6 8 0 20-10 19-6-1-8-3-12-3s-7 2-13 3C9 72 4 60 10 52c6-6 12-18 22-18z" />
        </g>
      </svg>
      <div className="absolute left-[1080px] top-[672px] text-[14px] leading-[16px] text-[#555]/55 whitespace-nowrap">转到“设置”以激活 Windows。</div>
      <div className="absolute left-[1213px] top-[646px] text-[37px] leading-[60px] font-bold text-white/80 whitespace-nowrap [text-shadow:0_0_2px_#bbb]">经验</div>
      <div className="absolute left-[1049px] top-[704px] text-[32px] leading-[36px] text-white/75 whitespace-nowrap [text-shadow:0_0_3px_#bbb]">jingyan.baidu.com</div>
    </div>
  );
}

export default function App() {
  return (
    <div className="relative w-[1366px] h-[768px] overflow-hidden bg-white font-['Liberation_Sans','Noto_Sans_CJK_SC',sans-serif]">
      <TitleBar />
      <TabBar />
      <Ribbon />
      <FormulaBar />
      <div className="flex h-[498px]">
        <div className="w-[1106px] shrink-0">
          <div className="flex h-[471px]">
            <Sheet />
            <VScroll />
          </div>
          <SheetTabs />
        </div>
        <FieldPanel />
      </div>
      <StatusBar />
      <Taskbar />
      <RedArrows />
      <Watermark />
    </div>
  );
}
